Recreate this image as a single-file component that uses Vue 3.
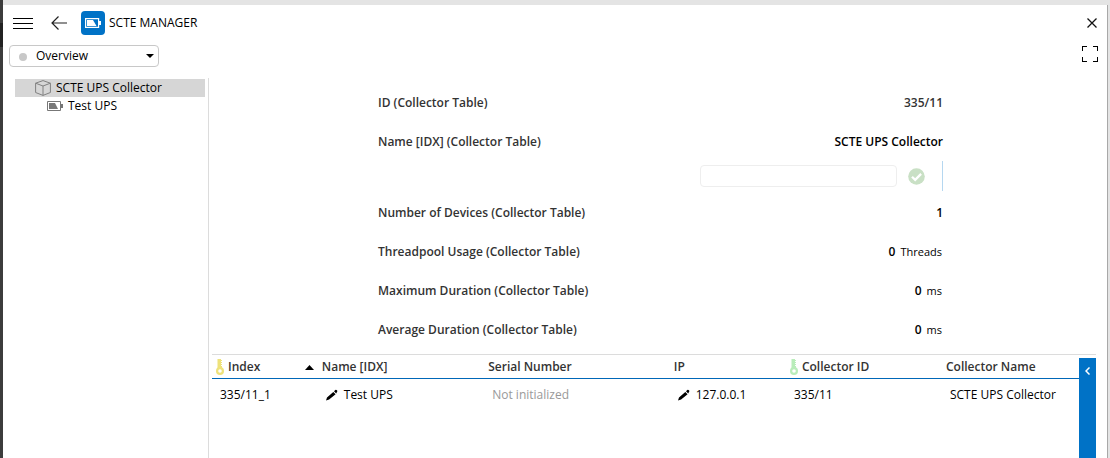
<script setup>
import { ref } from 'vue'

const page = ref('overview')
const newName = ref('')

const params = [
  { label: 'ID (Collector Table)', value: '335/11', muted: true },
  { label: 'Name [IDX] (Collector Table)', value: 'SCTE UPS Collector', editable: true },
  { label: 'Number of Devices (Collector Table)', value: '1' },
  { label: 'Threadpool Usage (Collector Table)', value: '0', unit: 'Threads' },
  { label: 'Maximum Duration (Collector Table)', value: '0', unit: 'ms' },
  { label: 'Average Duration (Collector Table)', value: '0', unit: 'ms' },
]

const columns = [
  { title: 'Index', key: 'gold', sorted: true, width: '12.2%' },
  { title: 'Name [IDX]', width: '19.2%' },
  { title: 'Serial Number', width: '21.4%' },
  { title: 'IP', width: '13.4%' },
  { title: 'Collector ID', key: 'green', width: '18%' },
  { title: 'Collector Name', width: '15.8%' },
]

const rows = [
  [
    { text: '335/11_1' },
    { text: 'Test UPS', edit: true },
    { text: 'Not initialized', empty: true },
    { text: '127.0.0.1', edit: true },
    { text: '335/11' },
    { text: 'SCTE UPS Collector' },
  ],
]
</script>

<template>
  <div class="window">
    <div class="dock"></div>
    <div class="card">
      <header class="titlebar">
        <button class="icon-btn menu" aria-label="Menu">
          <svg width="20" height="12" viewBox="0 0 20 12" shape-rendering="crispEdges"><path d="M0 1h20v1H0zM0 6h20v1H0zM0 11h20v1H0z" fill="#000" /></svg>
        </button>
        <button class="icon-btn back" aria-label="Back">
          <svg width="16" height="14" viewBox="0 0 16 14" fill="none" stroke="#222" stroke-width="1.2"><path d="M16 7H1M7.500.5 1 7l6.500 6.500" /></svg>
        </button>
        <span class="app-icon">
          <svg width="16" height="10" viewBox="0 0 16 10"><path d="M.6.6h13v8.800H.6z" fill="none" stroke="#fff" stroke-width="1.200" /><path d="M14 3h2v4h-2z" fill="#fff" /><path d="M2 2h6l3.500 6H2z" fill="#fff" /></svg>
        </span>
        <h1 class="title">SCTE MANAGER</h1>
        <button class="icon-btn close" aria-label="Close">
          <svg width="10" height="10" viewBox="0 0 10 10" fill="none" stroke="#111" stroke-width="1.3"><path d="M.5.5l9 9M9.500.5l-9 9" /></svg>
        </button>
      </header>

      <div class="toolbar">
        <div class="page-select">
          <span class="dot"></span>
          <select v-model="page" aria-label="Page">
            <option value="overview">Overview</option>
          </select>
          <svg class="caret" width="8" height="4" viewBox="0 0 8 4"><path d="M0 0h8L4 4z" /></svg>
        </div>
        <button class="icon-btn full" aria-label="Full screen">
          <svg width="16" height="16" viewBox="0 0 16 16" fill="none" stroke="#000" shape-rendering="crispEdges"><path d="M.5 5V.5H5M11 .5h4.500V5M15.500 11v4.500H11M5 15.500H.5V11" /></svg>
        </button>
      </div>

      <div class="body">
        <nav class="tree">
          <button class="node selected">
            <svg width="16" height="16" viewBox="0 0 16 16" fill="none" stroke="#808080"><path d="M8 .6l7.400 2.600v9.300L8 15.400.6 12.500V3.200zM.6 3.200 8 6l7.400-2.800M8 6v9.400" /></svg>
            SCTE UPS Collector
          </button>
          <button class="node child">
            <svg width="16" height="10" viewBox="0 0 16 10"><path d="M.5.500h13v9H.5z" fill="none" stroke="#777" /><path d="M14 3h2v4h-2z" fill="#777" /><path d="M2 2h6l3 6H2z" fill="#777" /></svg>
            Test UPS
          </button>
        </nav>

        <main class="main">
          <div class="params">
            <template v-for="p in params" :key="p.label">
              <div class="param">
                <span class="label">{{ p.label }}</span>
                <span class="value" :class="{ muted: p.muted }">{{ p.value }}<span v-if="p.unit" class="unit">{{ p.unit }}</span></span>
              </div>
              <form v-if="p.editable" class="editor" @submit.prevent>
                <input v-model="newName" type="text" aria-label="Name [IDX]" />
                <button class="icon-btn" aria-label="Apply">
                  <svg width="17" height="17" viewBox="0 0 17 17"><circle cx="8.500" cy="8.500" r="8.300" fill="#c9e0c5" /><path d="M4 8.700l3.200 3.200 5.900-6" fill="none" stroke="#fff" stroke-width="2.300" /></svg>
                </button>
              </form>
            </template>
          </div>

          <section class="devices">
            <div class="table-wrap">
              <table>
                <colgroup>
                  <col v-for="c in columns" :key="c.title" :style="{ width: c.width }" />
                </colgroup>
                <thead>
                  <tr>
                    <th v-for="c in columns" :key="c.title" scope="col">
                      <div class="head">
                        <svg v-if="c.key" class="key" :class="c.key" width="8" height="16" viewBox="0 0 8 16"><path d="M1.500 0H5v1h1v1H5v1h1v1H5v1h1v1H5v1h1v3H1.500z" /><circle cx="4" cy="12" r="4" /><circle cx="4" cy="12" r="1.800" fill="#fff" /></svg>
                        <span>{{ c.title }}</span>
                        <svg v-if="c.sorted" class="sort" width="9" height="5" viewBox="0 0 9 5"><path d="M4.500 0 9 5H0z" /></svg>
                      </div>
                    </th>
                  </tr>
                </thead>
                <tbody>
                  <tr v-for="(row, i) in rows" :key="i">
                    <td v-for="(cell, j) in row" :key="j">
                      <div class="cell" :class="{ empty: cell.empty }">
                        <svg v-if="cell.edit" width="12" height="12" viewBox="0 0 12 12"><path d="M0 11.500l1-3L7.300 2.900l2.300 2.300-6.500 5.300zM8 2.300 9.300 1q.6-.5 1.200 0l.6.600q.6.600 0 1.200L10.200 4.500z" /></svg>
                        {{ cell.text }}
                      </div>
                    </td>
                  </tr>
                </tbody>
              </table>
            </div>
            <button class="expander" aria-label="Expand panel">
              <svg width="5" height="8" viewBox="0 0 5 8" fill="none" stroke="#fff" stroke-width="1.500"><path d="M4.500.5 1 4l3.500 3.500" /></svg>
            </button>
          </section>
        </main>
      </div>
    </div>
  </div>
</template>

<style>
body {
  margin: 0;
}
</style>

<style scoped>
.window {
  box-sizing: border-box;
  display: flex;
  min-height: 100vh;
  font: 12px/18px "Segoe UI", "Open Sans", "Noto Sans", sans-serif;
  color: #000;
  background: #e4e4e4;
}
.window * {
  box-sizing: border-box;
}
.dock {
  width: 3px;
  background: linear-gradient(#3c3c3c 23px, #222 23px, #222 47px, #3c3c3c 47px);
}
.card {
  flex: 1;
  min-width: 0;
  display: flex;
  flex-direction: column;
  margin: 5px 2px 0 0;
  background: #fff;
  border-right: 1px solid #a8a8a8;
}
button {
  font: inherit;
  color: inherit;
  margin: 0;
  padding: 0;
  border: 0;
  background: none;
}
svg {
  display: block;
  flex: none;
}
.titlebar {
  display: flex;
  align-items: center;
  height: 36px;
  padding: 0 10px;
}
.back {
  margin-left: 18px;
}
.app-icon {
  display: grid;
  place-items: center;
  width: 24px;
  height: 24px;
  margin: 0 4px 0 14px;
  border-radius: 4px;
  background: #0072c6;
}
.title {
  margin: 0;
  font-size: 12px;
  font-weight: 400;
}
.close {
  margin-left: auto;
}
.toolbar {
  display: flex;
  justify-content: space-between;
  align-items: flex-end;
  height: 26px;
  padding: 0 9px 0 6px;
}
.page-select {
  position: relative;
}
.page-select select {
  display: block;
  appearance: none;
  width: 150px;
  height: 22px;
  padding: 0 20px 0 26px;
  font: inherit;
  color: #000;
  border: 1px solid #c8c8c8;
  border-radius: 4px;
  background: #fff;
}
.dot {
  position: absolute;
  left: 10px;
  top: 8px;
  width: 8px;
  height: 8px;
  border-radius: 50%;
  background: #c8c8c8;
}
.caret {
  position: absolute;
  right: 5px;
  top: 9px;
}
.full {
  align-self: center;
}
.body {
  flex: 1;
  display: flex;
  padding-top: 11px;
}
.tree {
  width: 206px;
  padding: 1px 3px 0 12px;
  border-right: 1px solid #dcdcdc;
}
.node {
  display: flex;
  align-items: center;
  gap: 5px;
  width: 100%;
  height: 18px;
  padding-left: 20px;
}
.node.child {
  padding-left: 32px;
}
.selected {
  background: #d6d6d6;
}
.main {
  flex: 1;
  min-width: 0;
  display: flex;
  flex-direction: column;
}
.params {
  padding: 5px 164px 5px 169px;
}
.param {
  display: flex;
  justify-content: space-between;
  align-items: center;
  height: 39px;
  font-weight: 600;
}
.label,
.muted {
  color: #333;
}
.unit {
  margin: 0 1px 0 5px;
  font-size: 11px;
  font-weight: 400;
}
.editor {
  display: flex;
  align-items: center;
  justify-content: flex-end;
  gap: 11px;
  height: 30px;
  margin-bottom: 2px;
  padding-right: 17px;
  border-right: 1px solid #b5d7f0;
}
.editor input {
  width: 197px;
  height: 22px;
  padding: 0 6px;
  font: inherit;
  border: 1px solid #eee;
  border-radius: 4px;
}
.devices {
  flex: 1;
  display: flex;
  align-items: stretch;
  margin: 0 11px 0 3px;
  border-top: 1px solid #dcdcdc;
}
.table-wrap {
  flex: 1;
  min-width: 0;
}
table {
  width: 100%;
  table-layout: fixed;
  border-collapse: separate;
  border-spacing: 0;
}
th,
td {
  padding: 0;
  text-align: left;
  white-space: nowrap;
}
th {
  font-weight: 600;
  color: #333;
  border-bottom: 1px solid #0067b8;
}
.head {
  display: flex;
  align-items: center;
  gap: 4px;
  height: 23px;
  padding: 1px 4px 0;
}
.gold {
  fill: #eee27a;
}
.green {
  fill: #b9edba;
}
.sort {
  margin-left: auto;
  fill: #000;
}
.cell {
  display: flex;
  align-items: center;
  gap: 6px;
  height: 32px;
  padding: 0 8px;
}
.empty {
  color: #999;
}
.expander {
  width: 17px;
  margin-top: 3px;
  padding: 9px 0 0 6px;
  display: flex;
  align-items: flex-start;
  background: #0072c6;
}
</style>
